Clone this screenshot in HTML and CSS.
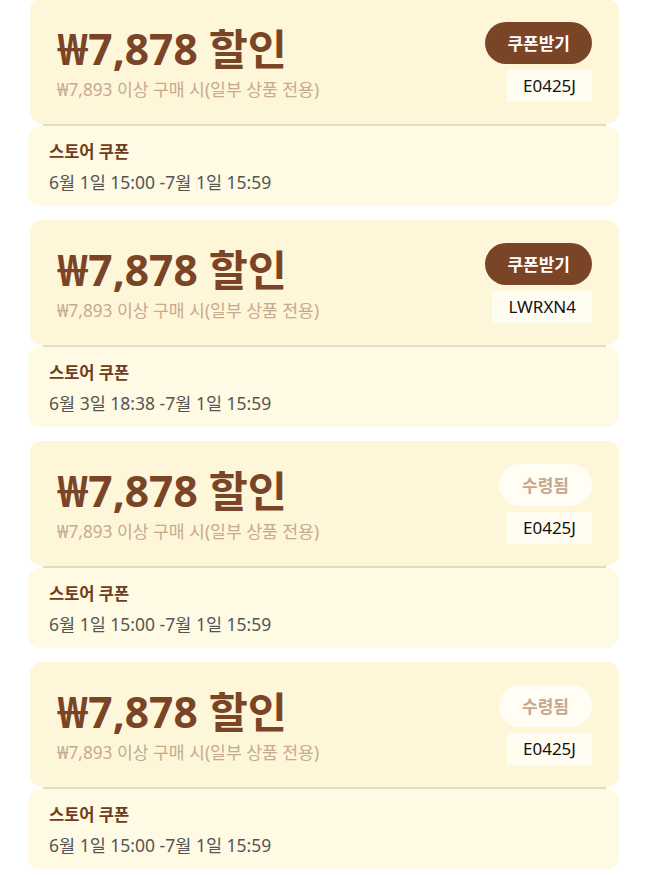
FILE: index.html
```html
<!DOCTYPE html>
<html lang="ko">

<head>
    <meta charset="UTF-8">
    <meta name="viewport" content="width=device-width, initial-scale=1.0">
    <title>쿠폰</title>
    <link rel="stylesheet" href="styles.css">
</head>

<body>
    <div class="couponlist">
        <div class="coupon">
            <div class="coupon-top">
                <div class="coupon-info">
                    <div class="coupon-title">₩7,878 할인</div>
                    <div class="coupon-cond">₩7,893 이상 구매 시(일부 상품 전용)</div>
                </div>
                <div class="coupon-side">
                    <button class="getbtn">쿠폰받기</button>
                    <div class="code">E0425J</div>
                </div>
            </div>
            <div class="divider"></div>
            <div class="coupon-bottom">
                <div class="store">스토어 쿠폰</div>
                <div class="period">6월 1일 15:00 -7월 1일 15:59</div>
            </div>
        </div>

        <div class="coupon">
            <div class="coupon-top">
                <div class="coupon-info">
                    <div class="coupon-title">₩7,878 할인</div>
                    <div class="coupon-cond">₩7,893 이상 구매 시(일부 상품 전용)</div>
                </div>
                <div class="coupon-side">
                    <button class="getbtn">쿠폰받기</button>
                    <div class="code">LWRXN4</div>
                </div>
            </div>
            <div class="divider"></div>
            <div class="coupon-bottom">
                <div class="store">스토어 쿠폰</div>
                <div class="period">6월 3일 18:38 -7월 1일 15:59</div>
            </div>
        </div>

        <div class="coupon">
            <div class="coupon-top">
                <div class="coupon-info">
                    <div class="coupon-title">₩7,878 할인</div>
                    <div class="coupon-cond">₩7,893 이상 구매 시(일부 상품 전용)</div>
                </div>
                <div class="coupon-side">
                    <button class="getbtn done">수령됨</button>
                    <div class="code">E0425J</div>
                </div>
            </div>
            <div class="divider"></div>
            <div class="coupon-bottom">
                <div class="store">스토어 쿠폰</div>
                <div class="period">6월 1일 15:00 -7월 1일 15:59</div>
            </div>
        </div>

        <div class="coupon">
            <div class="coupon-top">
                <div class="coupon-info">
                    <div class="coupon-title">₩7,878 할인</div>
                    <div class="coupon-cond">₩7,893 이상 구매 시(일부 상품 전용)</div>
                </div>
                <div class="coupon-side">
                    <button class="getbtn done">수령됨</button>
                    <div class="code">E0425J</div>
                </div>
            </div>
            <div class="divider"></div>
            <div class="coupon-bottom">
                <div class="store">스토어 쿠폰</div>
                <div class="period">6월 1일 15:00 -7월 1일 15:59</div>
            </div>
        </div>
    </div>
</body>

</html>
```

FILE: styles.css
```css
* {
    margin: 0;
    padding: 0;
    box-sizing: border-box;
}

body {
    background-color: #fff;
    font-family: "Noto Sans", "Noto Sans CJK KR", sans-serif;
}

.couponlist {
    display: flex;
    flex-direction: column;
    gap: 14px;
    padding: 0 29px 0 30px;
    margin-top: -1px;
}

.coupon {
    display: flex;
    flex-direction: column;
}

.coupon-top {
    display: flex;
    justify-content: space-between;
    align-items: center;
    height: 125px;
    padding: 0 27px;
    background-color: #fef6d9;
    border-radius: 12px;
}

.coupon-info {
    padding-top: 4px;
}

.coupon-title {
    font-size: 42.5px;
    font-weight: bold;
    line-height: 46px;
    color: #7a4427;
    white-space: nowrap;
}

.coupon-cond {
    margin-top: 7px;
    font-size: 17.2px;
    line-height: 22px;
    color: #c6aa90;
    white-space: nowrap;
}

.coupon-side {
    display: flex;
    flex-direction: column;
    align-items: flex-end;
    gap: 6px;
}

.getbtn {
    height: 42px;
    padding: 0 22px;
    border: none;
    border-radius: 21px;
    background-color: #7a4427;
    color: #fff;
    font-family: inherit;
    font-size: 17px;
    font-weight: bold;
}

.getbtn.done {
    background-color: #fffdf4;
    color: #c6a68e;
    padding: 0 23px;
}

.code {
    height: 32px;
    line-height: 32px;
    padding: 0 16px;
    background-color: #fffdf2;
    color: #111;
    font-size: 17px;
}

.divider {
    height: 2px;
    margin: 0 13px;
    background-color: #e6dbbd;
}

.coupon-bottom {
    height: 80px;
    padding: 14px 23px 0 21px;
    margin-left: -2px;
    background-color: #fffae3;
    border-radius: 12px;
}

.store {
    font-size: 16.5px;
    font-weight: 600;
    line-height: 24px;
    color: #6e3d20;
}

.period {
    margin-top: 6px;
    font-size: 17.5px;
    line-height: 24px;
    color: #555;
}
```
